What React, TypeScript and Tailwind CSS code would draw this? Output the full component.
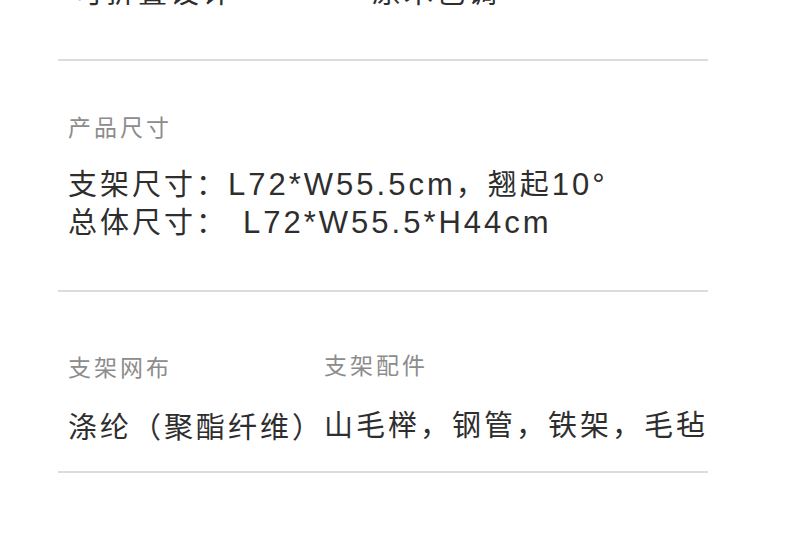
import React from 'react';

const fontStack = '"Liberation Sans", "Noto Sans CJK SC", sans-serif';

const Label: React.FC<{ children: React.ReactNode; className?: string }> = ({ children, className }) => (
  <div className={`text-[23px] leading-[30px] tracking-[3px] text-[#8c8c8c] ${className ?? ''}`}>{children}</div>
);

const Value: React.FC<{ children: React.ReactNode; className?: string }> = ({ children, className }) => (
  <div className={`text-[29px] leading-[37px] tracking-[3px] text-[#2e2e2e] whitespace-pre ${className ?? ''}`}>
    {children}
  </div>
);

// latin parts are drawn a bit larger than the CJK run
const Latin: React.FC<{ children: React.ReactNode; className?: string }> = ({ children, className }) => (
  <span className={`text-[31px] leading-[37px] tracking-[3px] ${className ?? ''}`}>{children}</span>
);

export default function App() {
  return (
    <div className="w-[790px] h-[548px] overflow-hidden bg-white" style={{ fontFamily: fontStack }}>
      <div className="ml-[58px] w-[650px]">
        {/* cut-off section */}
        <div className="h-[61px] border-b-2 border-[#dcdcdc] overflow-hidden">
          <div className="-mt-[25px] flex pl-[16px]">
            <Value className="w-[298px]">可折叠设计</Value>
            <Value>原木色调</Value>
          </div>
        </div>

        {/* size section */}
        <div className="pt-[52px] pb-[48px] pl-[10px] border-b-2 border-[#dcdcdc]">
          <Label>产品尺寸</Label>
          <div className="mt-[23px]">
            <Value>
              支架尺寸：<Latin>L72*W55.5cm</Latin>，翘起<Latin>10°</Latin>
            </Value>
            <Value>
              总体尺寸：<Latin className="ml-[15px]">L72*W55.5*H44cm</Latin>
            </Value>
          </div>
        </div>

        {/* material section */}
        <div className="pt-[61px] pb-[24px] pl-[10px] border-b-2 border-[#dcdcdc] flex">
          <div className="w-[258px]">
            <Label>支架网布</Label>
            <Value className="mt-[27px]">涤纶（聚酯纤维）</Value>
          </div>
          <div>
            <Label className="-mt-[2px] mb-[2px]">支架配件</Label>
            <Value className="mt-[27px]">山毛榉，钢管，铁架，毛毡</Value>
          </div>
        </div>
      </div>
    </div>
  );
}
